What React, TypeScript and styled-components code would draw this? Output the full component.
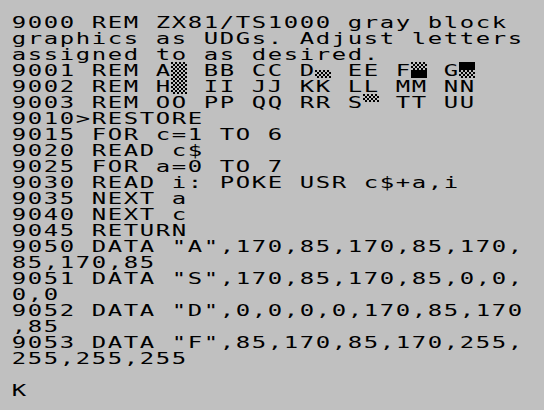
import React from 'react';
import styled, { createGlobalStyle, css } from 'styled-components';

const GlobalStyle = createGlobalStyle`
  html, body {
    margin: 0;
    padding: 0;
    background: #c0c0c0;
  }
`;

// placeholder characters standing for the user defined graphics
type UdgKind = 'full' | 'top' | 'bottom' | 'checkSolid' | 'solidCheck';

const udgMap: Record<string, UdgKind> = {
  '#': 'full',
  '^': 'top',
  '_': 'bottom',
  '%': 'checkSolid',
  '&': 'solidCheck',
};

const listing = [
  '9000 REM ZX81/TS1000 gray block',
  'graphics as UDGs. Adjust letters',
  'assigned to as desired.',
  '9001 REM A# BB CC D_ EE F% G&',
  '9002 REM H# II JJ KK LL MM NN',
  '9003 REM OO PP QQ RR S^ TT UU',
  '9010>RESTORE',
  '9015 FOR c=1 TO 6',
  '9020 READ c$',
  '9025 FOR a=0 TO 7',
  '9030 READ i: POKE USR c$+a,i',
  '9035 NEXT a',
  '9040 NEXT c',
  '9045 RETURN',
  '9050 DATA "A",170,85,170,85,170,',
  '85,170,85',
  '9051 DATA "S",170,85,170,85,0,0,',
  '0,0',
  '9052 DATA "D",0,0,0,0,170,85,170',
  ',85',
  '9053 DATA "F",85,170,85,170,255,',
  '255,255,255',
  '',
  'K',
];

const Screen = styled.div`
  width: 544px;
  height: 410px;
  box-sizing: border-box;
  padding: 14px 0 0 11px;
  background: #c0c0c0;
  color: #000;
  overflow: hidden;
`;

const Row = styled.div`
  display: grid;
  grid-template-columns: repeat(32, 16px);
  height: 16px;
`;

const Cell = styled.span`
  display: block;
  width: 16px;
  height: 16px;
  overflow: visible;
`;

const Glyph = styled.span`
  display: inline-block;
  padding-left: 0.6px;
  font-family: "DejaVu Sans Mono", monospace;
  font-size: 16.5px;
  line-height: 16px;
  white-space: pre;
  transform: scaleX(1.45);
  transform-origin: 0 0;
`;

const checker = css`
  background: repeating-conic-gradient(transparent 0 25%, #000 0 50%) 0 0 / 4px 4px;
`;

const Half = styled.span<{ $fill: 'checker' | 'solid' | 'none' }>`
  display: block;
  height: 8px;
  ${p => p.$fill === 'checker' && checker}
  ${p => p.$fill === 'solid' && 'background: #000;'}
`;

const halves: Record<UdgKind, ['checker' | 'solid' | 'none', 'checker' | 'solid' | 'none']> = {
  full: ['checker', 'checker'],
  top: ['checker', 'none'],
  bottom: ['none', 'checker'],
  checkSolid: ['checker', 'solid'],
  solidCheck: ['solid', 'checker'],
};

const Udg = ({ kind }: { kind: UdgKind }) => (
  <Cell>
    <Half $fill={halves[kind][0]} />
    <Half $fill={halves[kind][1]} />
  </Cell>
);

const Line = ({ text }: { text: string }) => (
  <Row>
    {text.split('').map((ch, i) =>
      udgMap[ch] ? (
        <Udg key={i} kind={udgMap[ch]} />
      ) : (
        <Cell key={i}>
          <Glyph>{ch}</Glyph>
        </Cell>
      )
    )}
  </Row>
);

export default function App() {
  return (
    <>
      <GlobalStyle />
      <Screen>
        {listing.map((l, i) => (
          <Line key={i} text={l} />
        ))}
      </Screen>
    </>
  );
}
